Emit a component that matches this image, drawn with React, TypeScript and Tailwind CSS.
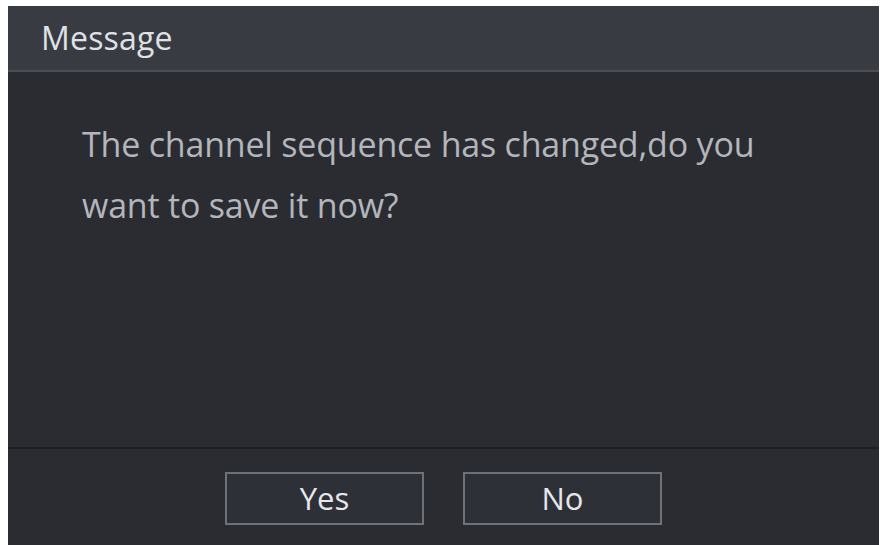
export default function App() {
	return (
		<div className="h-[545px] w-[882px] overflow-hidden bg-white pl-2 pr-[3px] pt-[6px]">
			<div
				className="flex h-[539px] flex-col bg-[#2a2c32]"
				style={{ fontFamily: '"Open Sans", "Noto Sans", sans-serif' }}
			>
				<div className="flex h-[66px] shrink-0 items-center border-b-2 border-[#4a4e57] bg-[#383b42] pl-[33px]">
					<span className="text-[32px] tracking-[0.2px] text-[#dfe1e5]">Message</span>
				</div>
				<div className="flex-1 px-[74px] pt-[42px]">
					<p className="text-[34px] leading-[61px] tracking-[-0.2px] text-[#b3b6bc]">
						The channel sequence has changed,do you
						<br />
						want to save it now?
					</p>
				</div>
				<div className="shrink-0 border-t-2 border-[#1d1e22] bg-[#2a2c32] pb-[20px] pt-[23px]">
					<div className="flex justify-center gap-[39px]">
						<button className="h-[53px] w-[199px] border-2 border-[#6e7178] bg-[#2e3038] text-[31px] text-[#e6e7ea]">
							Yes
						</button>
						<button className="h-[53px] w-[199px] border-2 border-[#6e7178] bg-[#2e3038] text-[31px] text-[#e6e7ea]">
							No
						</button>
					</div>
				</div>
			</div>
		</div>
	)
}
